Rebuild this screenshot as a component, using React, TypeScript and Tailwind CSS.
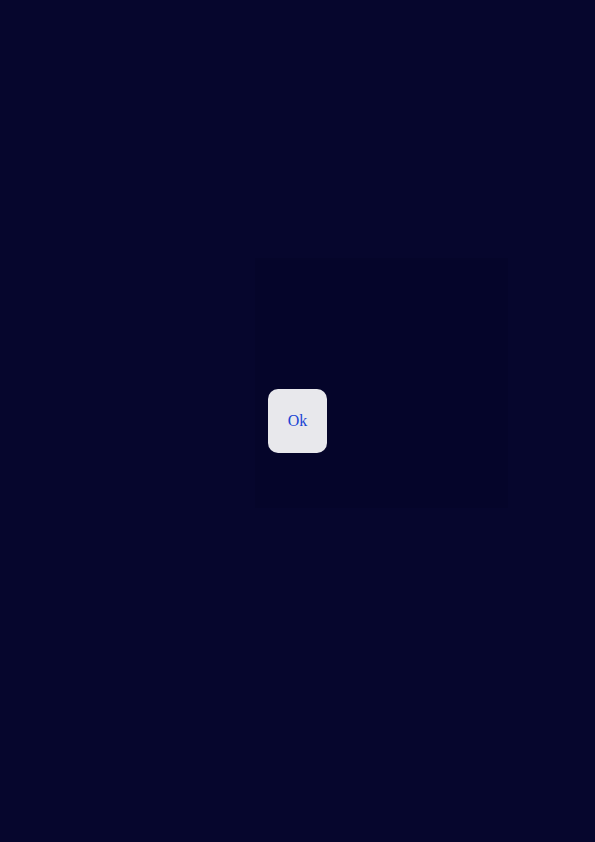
export default function App() {
  return (
    <div className="relative w-[595px] h-[842px] bg-[#06062d] flex items-center justify-center overflow-hidden">
      <div className="absolute left-[255px] top-[258px] w-[253px] h-[250px] bg-[#05052a]" />
      <button className="relative w-[59px] h-[64px] rounded-[10px] bg-[#e8e8ec] text-[#1a44d4] text-[16px] [font-family:'Liberation_Serif',serif]">
        Ok
      </button>
    </div>
  );
}
